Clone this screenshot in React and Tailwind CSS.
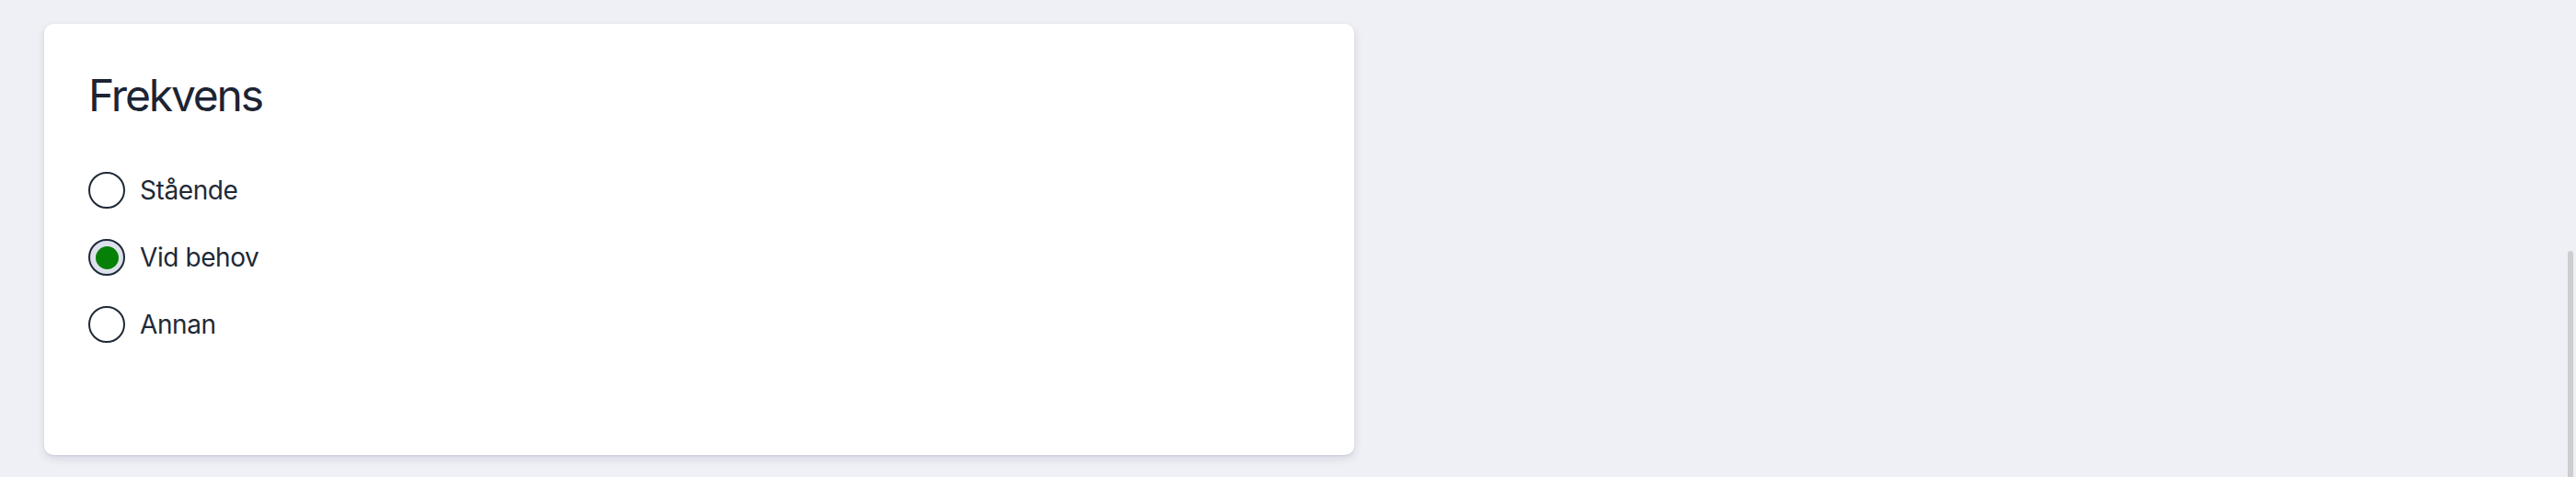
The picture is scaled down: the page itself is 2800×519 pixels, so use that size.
import { useState } from "react";

const options = [
  { id: "staende", label: "Stående" },
  { id: "vid-behov", label: "Vid behov" },
  { id: "annan", label: "Annan" },
];

function RadioOption({ option, checked, onSelect }) {
  return (
    <label
      className="flex cursor-pointer items-center gap-4"
      onClick={() => onSelect(option.id)}
    >
      <span
        className={
          checked
            ? "flex h-10 w-10 items-center justify-center rounded-full border-2 border-[#1f2937] bg-[#dde1ec]"
            : "flex h-10 w-10 items-center justify-center rounded-full border-2 border-[#1f2937] bg-white"
        }
      >
        {checked && <span className="h-[25px] w-[25px] rounded-full bg-[#068006]"></span>}
      </span>
      <span className="text-[28px] leading-10 tracking-[-0.015em] text-[#1f2937]">
        {option.label}
      </span>
    </label>
  );
}

export default function App() {
  const [selected, setSelected] = useState("vid-behov");

  return (
    <div
      className="relative h-[519px] overflow-hidden bg-[#eff0f5] pl-12 pt-[26px]"
      style={{ fontFamily: "Inter, 'Noto Sans', sans-serif" }}
    >
      <div className="h-[469px] w-[1424px] rounded-[10px] bg-white px-12 pt-12 shadow-[0_4px_10px_rgba(30,41,80,0.12),0_1px_3px_rgba(30,41,80,0.08)]">
        <h2 className="text-[48px] leading-[60px] tracking-[-0.045em] text-[#1c2434]">
          Frekvens
        </h2>
        <div className="mt-[53px] flex flex-col gap-[33px]">
          {options.map((option) => (
            <RadioOption
              key={option.id}
              option={option}
              checked={selected === option.id}
              onSelect={setSelected}
            />
          ))}
        </div>
      </div>
      <div className="absolute bottom-0 right-[3px] top-[273px] w-[6px] rounded-t-full bg-[#cdcdcd]"></div>
    </div>
  );
}
